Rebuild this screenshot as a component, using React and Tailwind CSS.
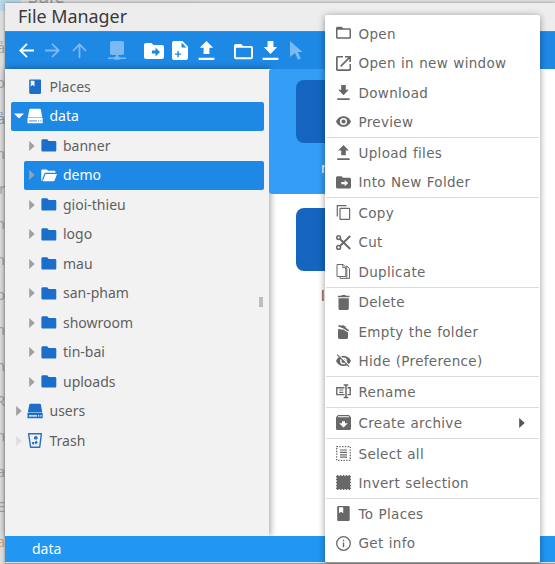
import React from "react";

const iconPaths = {
  folder: <path fillRule="evenodd" d="M1.5.8h4.2l1.5 1.5h6.3c.8 0 1.5.6 1.5 1.4v7.6c0 .8-.7 1.5-1.5 1.5h-12C.7 12.8 0 12.100 0 11.300V2.300C0 1.400.7.8 1.500.8zM1.500 3.800v7.500h12V3.800z" />,
  open: <path d="M1.700 0H7v1.500H1.700v11.800h11.800V8H15v5.300c0 1-.7 1.700-1.500 1.700H1.700C.7 15 0 14.300 0 13.300V1.700C0 .7.7 0 1.700 0zM9 0h6v6h-1.600V2.700l-8.200 8.200-1.100-1.100 8.200-8.200H9z" />,
  download: <path d="M5.200 0h4.600v4.800h3L7.500 10.200 2.200 4.800h3zM1.300 13.300h12.400V15H1.300z" />,
  upload: <path d="M5.200 10.300h4.600V5.400h3L7.500 0 2.200 5.400h3zM1.300 13.200h12.400V15H1.300z" />,
  eye: <path fillRule="evenodd" d="M7.500 2.200C4.100 2.200 1.200 4.400 0 7.500c1.200 3.100 4.100 5.300 7.500 5.300S13.800 10.600 15 7.500C13.800 4.400 10.900 2.200 7.500 2.200zm0 1.700a3.600 3.600 0 110 7.200 3.600 3.600 0 010-7.200zm0 1.500a2.100 2.100 0 100 4.200 2.100 2.100 0 000-4.200z" />,
  into: <path fillRule="evenodd" d="M1.500 1.200h4l1.600 1.600h6.400c.8 0 1.500.7 1.500 1.500V12c0 .8-.7 1.500-1.500 1.500h-12C.7 13.500 0 12.800 0 12V2.700c0-.9.7-1.500 1.500-1.500zM8.700 5v2H5.300v2.300h3.400v2l3.500-3.200z" />,
  copy: <g fill="none" stroke="currentColor"><path d="M1.300 11.500V.6h9.200" strokeWidth="1.200" /><rect x="4" y="3.400" width="9.600" height="11" rx=".7" strokeWidth="1.200" /></g>,
  cut: <g fill="none" stroke="currentColor"><circle cx="2.600" cy="2.600" r="1.900" strokeWidth="1.500" /><circle cx="2.600" cy="12.400" r="1.900" strokeWidth="1.500" /><path d="M4 4l10.200 10M4 11L14.200 1" strokeWidth="1.900" /></g>,
  duplicate: <g fill="none" stroke="currentColor" strokeWidth="1"><path d="M1 .5h6l2.800 2.700v9.300H1zM6.800.8v2.900h3" /><path d="M10 2.200h1l2.500 2.500v9.700H4.200v-1.900M10.800 2.500v11.500" /></g>,
  trash: <path d="M2.500 3.200h10.300v10.300c0 .8-.7 1.500-1.500 1.500H4c-.8 0-1.500-.7-1.500-1.500zM1.800.8h3.500L6 0h3.300l.7.8h3.500v1.500H1.800z" />,
  empty: <g><path d="M2 5.200L3 5l9 4v4.500c0 .8-.7 1.500-1.500 1.500H3.500c-.8 0-1.500-.7-1.500-1.500z" /><path d="M2.300 5.500h5l4.700 3v1H2.300z" /><path d="M2.700.9l3 .8L6.600 1l3 1.500.2 1.300L13 6l-.8 1.400L7 4.200 2.300 2.500z" /></g>,
  hidden: <g><path fillRule="evenodd" d="M7.500 1.800C4.100 1.800 1.200 3.900 0 6.900 1.200 9.900 4.100 12 7.500 12S13.800 9.900 15 6.900C13.800 3.900 10.900 1.800 7.500 1.800zm0 1.700a3.400 3.400 0 110 6.800 3.400 3.400 0 010-6.800zm0 1.400a2 2 0 100 4 2 2 0 000-4z" /><path d="M2.300.5L14 12.200" stroke="white" strokeWidth="1.300" /><path d="M1.100.7L13 12.600" stroke="currentColor" strokeWidth="1.200" /></g>,
  rename: <g fill="none" stroke="currentColor"><path d="M8.500 3.800H.8v6.800h7.700M11.500 3.800h2.700v6.800h-2.700" strokeWidth="1.400" /><path d="M3.300 6h4M3.300 8.400h4" strokeWidth="1.200" /><path d="M7.700 1h4.600M7.700 13.400h4.600M10 1v12.400" strokeWidth="1.500" /></g>,
  archive: <path fillRule="evenodd" d="M2 0h11l2 2.300v11.200c0 .8-.7 1.500-1.500 1.500h-12C.7 15 0 14.300 0 13.500V2.300zM2.300 1.300l-.7.9h11.800l-.7-.9zM6 6.300v2H3.200L7.500 12.500l4.300-4.200H9v-2z" />,
  all: <g fill="none" stroke="currentColor"><rect x=".7" y=".7" width="13.600" height="13.600" strokeWidth="1.300" strokeDasharray="1.400 1.320" /><path d="M4 4h7M4 6.400h7M4 8.800h7M4 11.200h7" strokeWidth="1.200" /></g>,
  invert: <g><rect x="1.800" y="1.800" width="11.400" height="11.400" /><path d="M1.700 0v15M4.600 0v15M7.500 0v15M10.400 0v15M13.300 0v15M0 1.700h15M0 4.600h15M0 7.500h15M0 10.400h15M0 13.300h15" stroke="currentColor" strokeWidth="1.500" /></g>,
  places: <path fillRule="evenodd" d="M2.500 0h10c.8 0 1.200.6 1.200 1.300v12.400c0 .8-.5 1.300-1.300 1.300H2.500c-.8 0-1.300-.5-1.300-1.300V1.300C1.200.5 1.700 0 2.500 0zM3 1.200v6l2.100-1.500 2.100 1.500v-6z" />,
  info: <g><circle cx="7.500" cy="7.500" r="6.800" fill="none" stroke="currentColor" strokeWidth="1.300" /><path d="M6.800 3.700h1.400v1.500H6.800zM6.800 6.500h1.400v4.800H6.800z" /></g>,
  back: <path d="M15 6.600v1.800H3.600l5 5L7.400 14.700 0 7.500 7.400.3l1.200 1.300-5 5z" />,
  forward: <path d="M0 6.600v1.800h11.400l-5 5 1.200 1.300L15 7.500 7.600.3 6.400 1.600l5 5z" />,
  up: <path d="M6.600 15V3.600l-5 5L.3 7.400 7.500 0l7.200 7.400-1.300 1.200-5-5V15z" />,
};

function Icon({ name, className = "size-[15px]" }) {
  return (
    <svg viewBox="0 0 15 15" className={`block shrink-0 overflow-visible ${className}`} fill="currentColor">
      {iconPaths[name]}
    </svg>
  );
}

function NetworkIcon() {
  return (
    <svg viewBox="0 0 20 19" className="block h-[19px] w-5 shrink-0 text-[#7bb9f2]" fill="currentColor">
      <rect x="3" y="0" width="14" height="14" rx="2" />
      <path d="M9 14h2v1.500h1.500v1h6.500v1.500h-6.500v.7h-5V18H1v-1.500h6.500v-1H9z" />
    </svg>
  );
}

function FolderInto() {
  return (
    <svg viewBox="0 0 20 16" className="block h-4 w-5 shrink-0" fill="currentColor">
      <path fillRule="evenodd" d="M2 0h5.500l2 2H18c1.100 0 2 .9 2 2v10c0 1.100-.9 2-2 2H2c-1.100 0-2-.9-2-2V2C0 .9.9 0 2 0zm9.500 4.500v3H8v3h3.500v3L16 9z" />
    </svg>
  );
}

function NewFile() {
  return (
    <svg viewBox="0 0 16 19" className="block h-[19px] w-4 shrink-0" fill="currentColor">
      <path fillRule="evenodd" d="M2 0h8.500L16 5.500V17c0 1.100-.9 2-2 2H2c-1.100 0-2-.9-2-2V2C0 .9.900 0 2 0zm7.500 1.500v5h5zM5.400 10v2.500H3v1.300h2.400v2.500h1.400v-2.500h2.400v-1.300H6.800V10z" />
    </svg>
  );
}

function Cursor() {
  return (
    <svg viewBox="0 0 13 19" className="block h-[19px] w-[13px] shrink-0 text-[#7bb9f2]" fill="currentColor">
      <path d="M0 0l12.500 11H7.800l3 6.400L8 18.800 5 12 0 16z" />
    </svg>
  );
}

function TreeIcon({ kind }) {
  if (kind === "places")
    return (
      <svg viewBox="0 0 16 16" className="block size-4 shrink-0" fill="#1b6fca">
        <path fillRule="evenodd" d="M3.500.5h9.300c.8 0 1.200.5 1.200 1.200v12c0 .7-.4 1.200-1.200 1.200H3.500c-.8 0-1.300-.5-1.300-1.200v-12c0-.7.5-1.200 1.300-1.200zM3.700 1.800v5.700l1.900-1.400 1.900 1.400V1.800z" />
      </svg>
    );
  if (kind === "drive" || kind === "users") {
    const main = kind === "drive" ? "white" : "#1b6fca";
    const mark = kind === "drive" ? "#69adf0" : "white";
    return (
      <svg viewBox="0 0 16 16" className="block size-4 shrink-0" fill={main}>
        <path d="M3.300.7h9.600c.5 0 .8.2.9.6L15.300 9.500H.8l1.600-8.200c.1-.4.4-.6.900-.6zM.5 10h15.200v5.300H.5z" />
        <path d="M2 12.300h8v1.200H2zM11 12.300h1.300v1.200H11zM13.300 12.300h1.300v1.200h-1.300z" fill={mark} />
      </svg>
    );
  }
  if (kind === "trash")
    return (
      <svg viewBox="0 0 16 16" className="block size-4 shrink-0" fill="none" stroke="#2872bd" strokeWidth="1.400">
        <path d="M1.600.8h12.800l-1.700 13.400H3.600z" strokeLinejoin="round" />
        <path d="M7 4l2-1.300L11 5 9.200 6.800 7 6zM9.500 7.500l1.300 2.300-2.200 1.700-1.200-2zM5 9h2v2.500H5.300z" fill="#2872bd" stroke="none" />
      </svg>
    );
  if (kind === "openFolder")
    return (
      <svg viewBox="0 0 16 13" className="block h-[13px] w-4 shrink-0" fill="white">
        <path d="M1.500.500h4.200L7 1.800h6c.9 0 1.500.5 1.500 1.300v.7H3.800L1.400 9.500V12C.6 12 .3 11.500.3 10.800V1.800C.3 1 .8.500 1.500.500z" />
        <path d="M4.500 4.900H16L13.700 11.300c-.2.700-.7 1-1.300 1H1.800z" />
      </svg>
    );
  return (
    <svg viewBox="0 0 16 13" className="block h-[13px] w-4 shrink-0" fill="#1b6fca">
      <path d="M1.800.3h4.400l1.500 1.600h6.200c.8 0 1.400.5 1.400 1.300v8c0 .8-.6 1.400-1.400 1.400H1.800c-.8 0-1.400-.6-1.400-1.400V1.700C.4.900 1 .3 1.800.3z" />
    </svg>
  );
}

function Arrow({ open, className }) {
  return (
    <svg viewBox="0 0 10 10" className={`block size-2.5 shrink-0 ${className}`} fill="currentColor">
      {open ? <path d="M0 2.500h10L5 7.500z" /> : <path d="M2.200 0l5.500 5-5.500 5z" />}
    </svg>
  );
}

const tree = [
  { label: "Places", kind: "places", root: true },
  { label: "data", kind: "drive", root: true, active: true, open: true, arrow: "text-white" },
  { label: "banner", arrow: "text-[#a0a0a0]" },
  { label: "demo", kind: "openFolder", active: true, arrow: "text-[#92a3b5]" },
  { label: "gioi-thieu", arrow: "text-[#a0a0a0]" },
  { label: "logo", arrow: "text-[#a0a0a0]" },
  { label: "mau", arrow: "text-[#a0a0a0]" },
  { label: "san-pham", arrow: "text-[#a0a0a0]" },
  { label: "showroom", arrow: "text-[#a0a0a0]" },
  { label: "tin-bai", arrow: "text-[#a0a0a0]" },
  { label: "uploads", arrow: "text-[#a0a0a0]" },
  { label: "users", kind: "users", root: true, arrow: "text-[#a0a0a0]" },
  { label: "Trash", kind: "trash", root: true, arrow: "text-[#dedede]" },
];

const menu = [
  [["folder", "Open"], ["open", "Open in new window"], ["download", "Download"], ["eye", "Preview"]],
  [["upload", "Upload files"], ["into", "Into New Folder"]],
  [["copy", "Copy"], ["cut", "Cut"], ["duplicate", "Duplicate"]],
  [["trash", "Delete"], ["empty", "Empty the folder"], ["hidden", "Hide (Preference)"]],
  [["rename", "Rename"]],
  [["archive", "Create archive", true]],
  [["all", "Select all"], ["invert", "Invert selection"]],
  [["places", "To Places"], ["info", "Get info"]],
];

// Ends of the sidebar labels of the page that lies under the window
const pageLetters = ["ả", "o", "ả", "n", "r", "h", "h", "o", "h", "h", "R", "m", "a", "E", "a"];

function TreeRow({ item }) {
  return (
    <div
      className={`mb-[1px] flex h-[28.500px] items-center rounded-[2px] text-[14px] ${item.root ? "ml-1.5 pl-[3px]" : "ml-[19px] pl-[3px]"} ${item.active ? "bg-[#1e88e5] text-white" : "text-[#5f5f5f]"}`}
    >
      {item.arrow ? <Arrow open={item.open} className={item.arrow} /> : <span className="w-2.5" />}
      <span className={item.root ? "ml-[3px]" : "ml-[3.500px]"}>
        <TreeIcon kind={item.kind} />
      </span>
      <span className="ml-[6.500px] leading-none">{item.label}</span>
    </div>
  );
}

export default function App() {
  return (
    <div className="relative flex h-[564px] w-[555px] flex-col overflow-hidden bg-[#dcdcdc] pt-[3px] pl-[5px] font-['Noto_Sans',sans-serif]">
      <div className="absolute top-0 left-0 h-[11px] w-[21px] bg-[#b9d6e4]" />
      <div className="absolute -top-[13px] left-[28px] text-[19px] leading-[19px] text-[#9c9c9c]">Sale</div>
      <div className="absolute top-0 left-[199px] h-[3px] w-[356px] bg-[#e0e0e0]" />
      <div className="absolute top-[30px] left-0 flex w-[5px] flex-col items-end overflow-hidden text-[14px] leading-[35.300px] text-[#a3a3a3]">
        {pageLetters.map((letter, i) => (
          <span key={i} className={i === 2 ? "text-[#7e9fc4]" : i === 14 ? "text-[#cf9c7c]" : ""}>{letter}</span>
        ))}
      </div>
      <div className="relative flex flex-1 flex-col bg-white shadow-[0_0_3px_rgba(0,0,0,0.45)]">
        <div className="flex h-[28px] shrink-0 items-center bg-[#ededed] pl-[13px] text-[17.900px] leading-none text-[#3a3a3a]">
          File Manager
        </div>
        <div className="flex h-[38px] shrink-0 items-center border-t border-[#4f86bb] bg-[#1e88e5] pl-[14px] text-white">
          <Icon name="back" />
          <Icon name="forward" className="ml-[11px] size-[15px] text-[#7bb9f2]" />
          <Icon name="up" className="ml-[12px] size-[15px] text-[#7bb9f2]" />
          <span className="ml-[20px]"><NetworkIcon /></span>
          <span className="ml-[17px]"><FolderInto /></span>
          <span className="ml-[8px]"><NewFile /></span>
          <Icon name="upload" className="ml-[9px] size-[19px]" />
          <Icon name="folder" className="mt-1 ml-[18px] size-[19px]" />
          <Icon name="download" className="ml-[8px] size-[19px]" />
          <span className="ml-[10px]"><Cursor /></span>
        </div>
        <div className="flex min-h-0 flex-1">
          <div className="relative z-10 w-[264px] shrink-0 bg-[#f2f2f2] pt-[3.500px] pr-[5px] shadow-[1px_0_7px_rgba(0,0,0,0.4)]">
            {tree.map((item) => <TreeRow key={item.label} item={item} />)}
            <div className="absolute top-[228px] right-[6px] h-[10px] w-[4px] bg-[#bdbdbd]" />
          </div>
          <div className="relative z-20 flex-1">
            <div className="h-[125px] w-[134px] rounded-[3px] bg-[#349df5] pt-[11px] pl-[27px]">
              <div className="h-[63px] w-[80px] rounded-[8px] bg-[#1565c0]" />
              <div className="pt-[14px] pl-[25px] text-[14px] text-white">ngoc</div>
            </div>
            <div className="pt-[14px] pl-[27px]">
              <div className="h-[63px] w-[80px] rounded-[8px] bg-[#1565c0]" />
              <div className="pt-[14px] pl-[25px] text-[14px] text-[#555]">logo</div>
            </div>
          </div>
        </div>
        <div className="z-20 flex h-[26px] shrink-0 items-center bg-[#2196f3] pl-[27px] text-[14px] leading-none text-white">
          data
        </div>
        <div className="h-[2px] shrink-0 border-t border-[#ddd] bg-[#999]" />
      </div>

      <div className="absolute top-[15px] left-[325px] z-30 h-[548px] w-[215px] rounded-[2px] border-b border-[#999] bg-white pt-[4.500px] font-['DejaVu_Sans',sans-serif] text-[13.500px] tracking-[0.32px] text-[#686868] shadow-[0_1px_7px_rgba(0,0,0,0.4)] [word-spacing:0.6px]">
        {menu.map((group, g) => (
          <div key={g} className={g ? "mx-[1px] border-t border-[#dcdcdc] pt-[0.4px]" : "mx-[1px]"}>
            {group.map(([icon, label, sub]) => (
              <div key={label} className="flex h-[29.400px] items-center pl-[10px]">
                <Icon name={icon} className="-mt-[1px] size-[15px]" />
                <span className="ml-[7.500px] flex-1 pt-[0.600px] leading-none">{label}</span>
                {sub && <Arrow className="mr-[12px] text-[#555]" />}
              </div>
            ))}
          </div>
        ))}
      </div>
    </div>
  );
}
